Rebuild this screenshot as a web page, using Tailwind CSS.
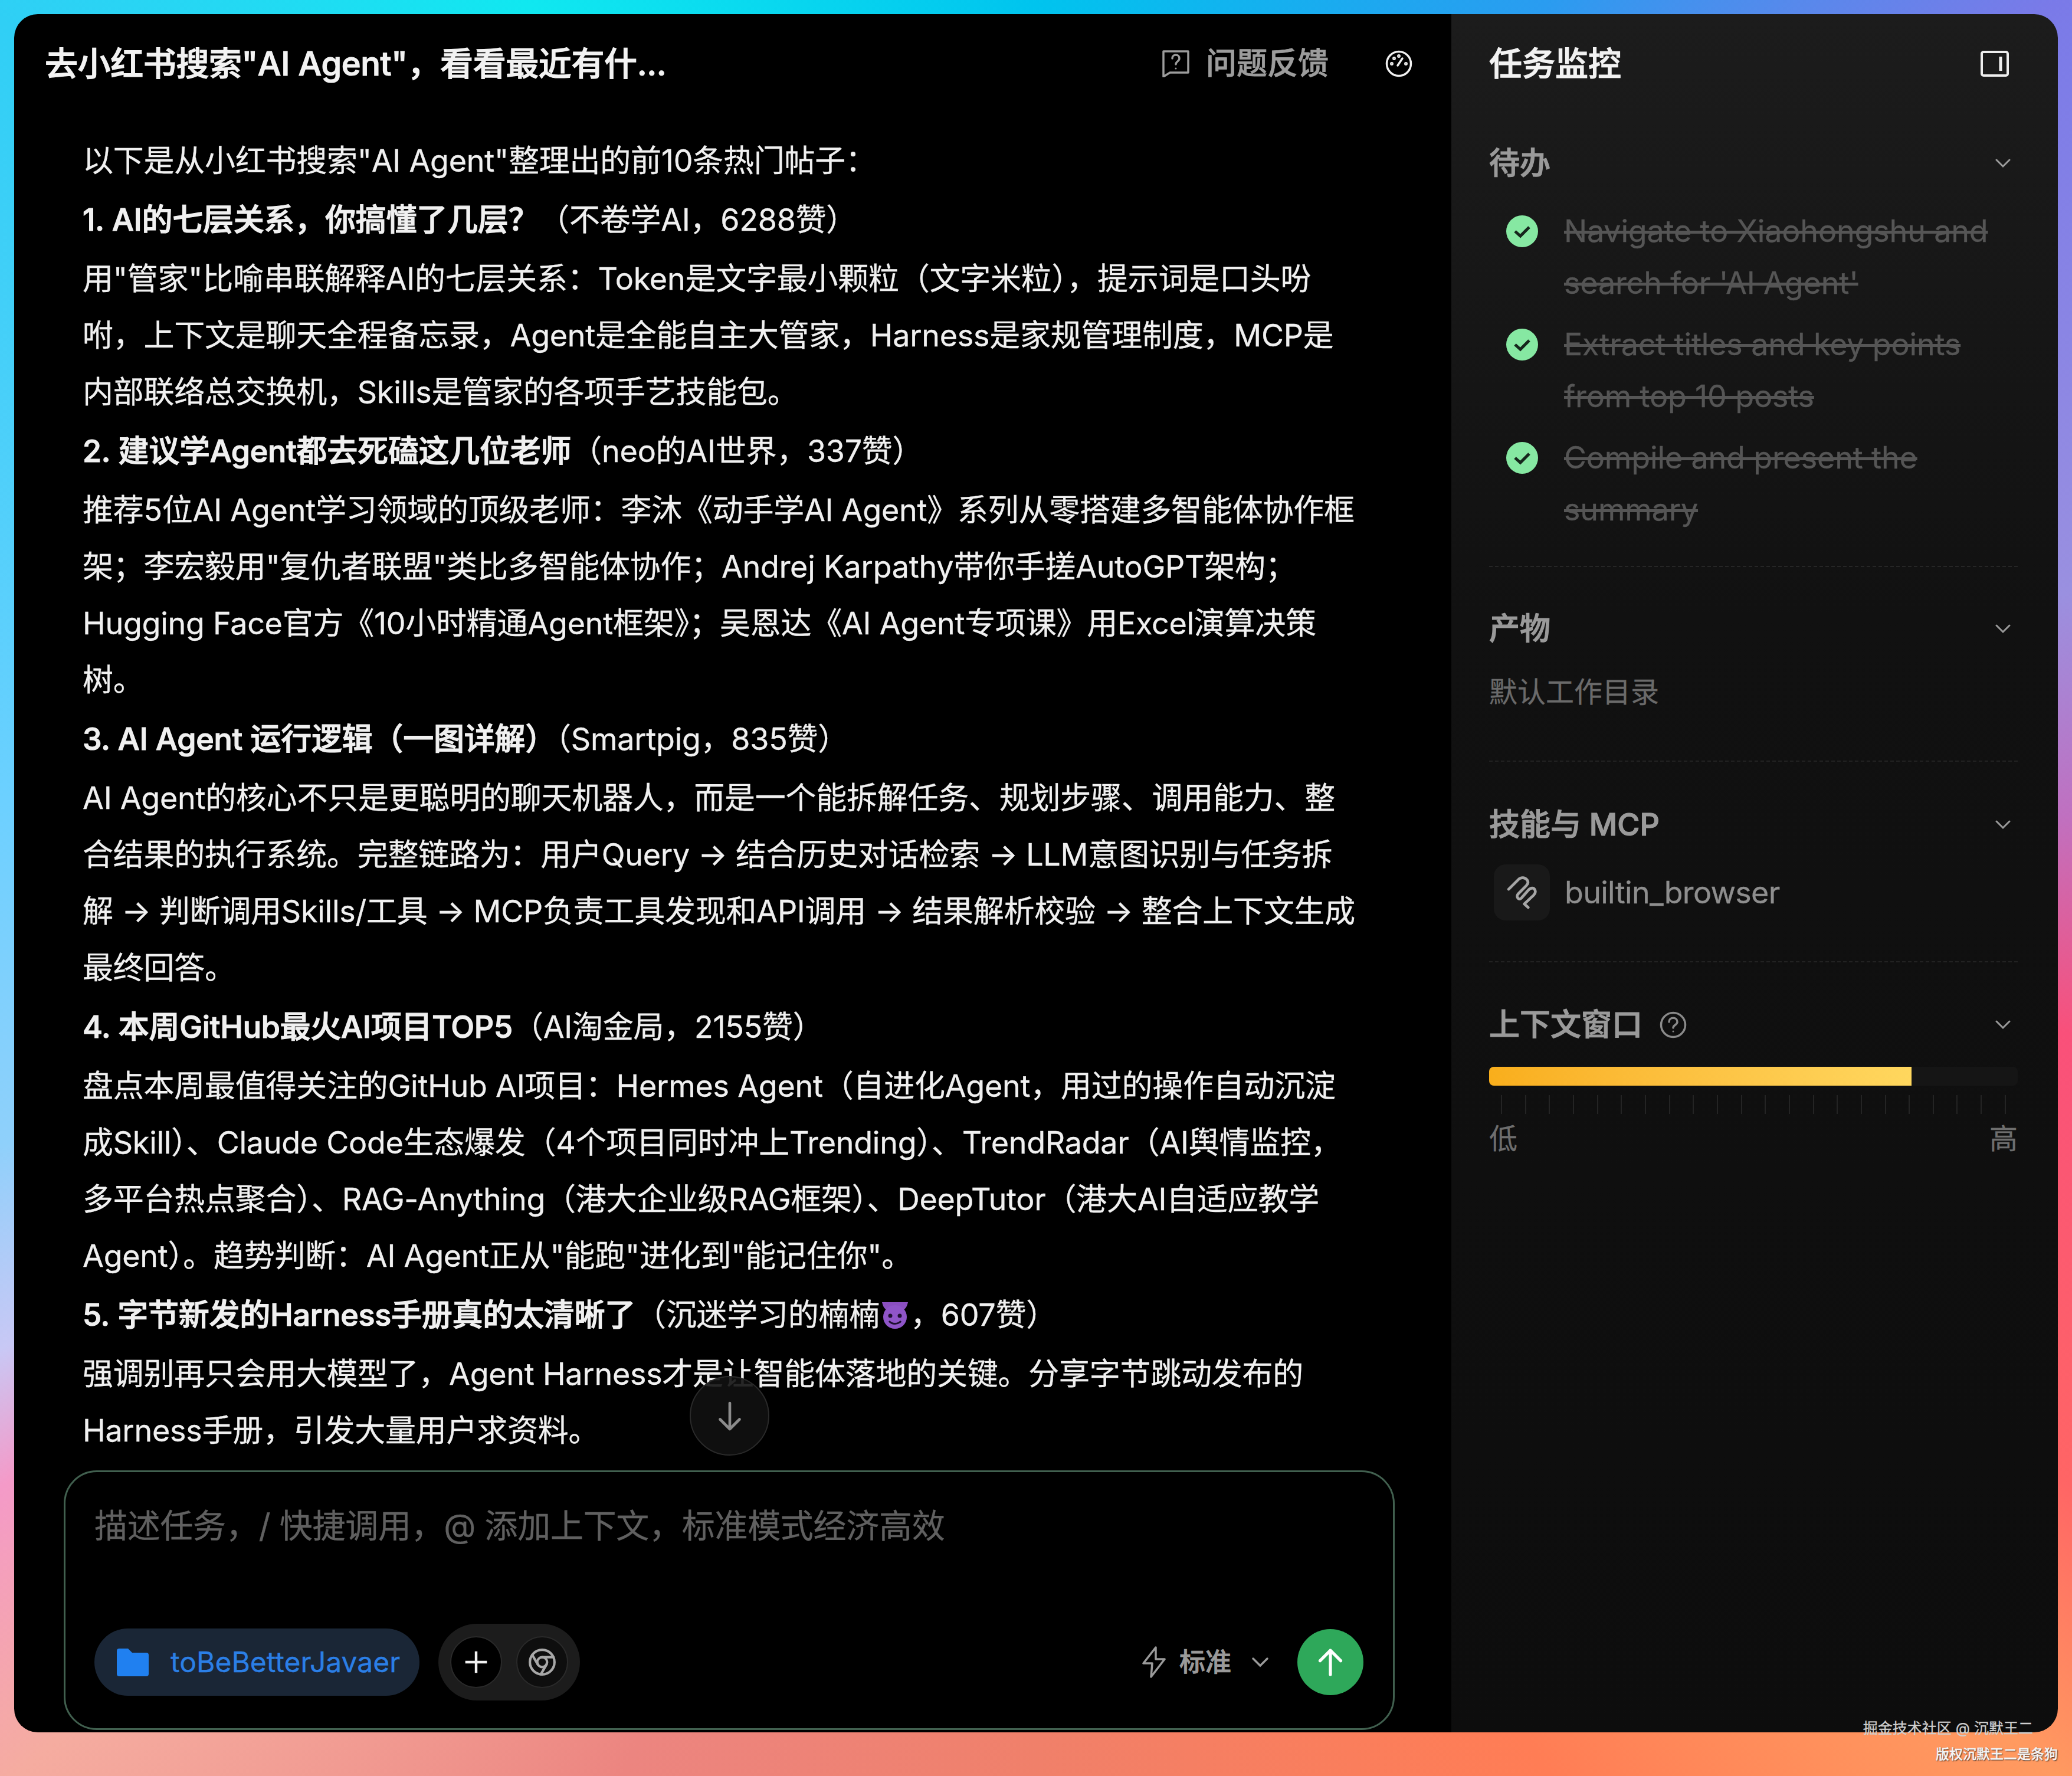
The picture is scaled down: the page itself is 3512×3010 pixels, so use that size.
<!DOCTYPE html>
<html lang="zh-CN">
<head>
  <meta charset="UTF-8" />
  <title>任务监控</title>
  <script src="https://cdn.jsdelivr.net/npm/@tailwindcss/browser@4"></script>
</head>
<body class="relative w-[3512px] h-[3010px] overflow-hidden p-[24px] font-['Inter','Noto_Sans_CJK_SC',sans-serif] [-webkit-text-stroke:0.3px] bg-[conic-gradient(from_0deg_at_50%_50%,#00c4ee_0deg,#2a9cf0_30deg,#7a7ae8_49deg,#9a90e0_74deg,#c070c0_86deg,#f9507a_98deg,#ff6565_120deg,#ff9a60_131deg,#ff7d55_150deg,#f0806a_180deg,#ec8580_205deg,#f5aca0_229deg,#f49ac8_240deg,#c8c8f5_246deg,#8fd0fb_256deg,#6cd0ff_275deg,#30cff5_310deg,#10e8f0_330deg,#00c4ee_360deg)]">

  <div class="flex w-[3464px] h-[2912px] rounded-[40px] overflow-hidden">

    <!-- chat -->
    <main class="relative flex flex-col w-[2436px] bg-black">
      <header class="flex items-center h-[168px] pl-[52px] pr-[66px] shrink-0">
        <h1 class="text-[56px] leading-[72px] font-medium tracking-[-0.4px] text-[#f2f2f2] whitespace-nowrap [-webkit-text-stroke:1.2px]">去小红书搜索"AI Agent"，看看最近有什...</h1>
        <div class="ml-auto flex items-center text-[#9c9c9c]">
          <svg class="w-[46px] h-[46px] mr-[28px]" viewBox="0 0 46 46" fill="none" stroke="currentColor" stroke-width="3.5"><path d="M2 2h42v36H13L2 45z" stroke-linejoin="round"/><path d="M17 14c0-8 12-8 12 0 0 5-6 5-6 10" stroke-linecap="round"/><circle cx="23" cy="31" r="1.5" fill="currentColor" stroke="none"/></svg>
          <span class="text-[52px] leading-[72px] font-medium [-webkit-text-stroke:0.8px]">问题反馈</span>
          <svg class="w-[46px] h-[46px] ml-[96px] text-[#f0f0f0]" viewBox="0 0 46 46" fill="none" stroke="currentColor" stroke-width="3.5" stroke-linecap="round"><circle cx="23" cy="23" r="20.5"/><path d="M21 26l8-12"/><circle cx="11" cy="23" r="1.2"/><circle cx="15" cy="14" r="1.2"/><circle cx="23" cy="10" r="1.2"/><circle cx="35" cy="23" r="1.2"/></svg>
        </div>
      </header>

      <article class="flex-1 min-h-0 overflow-hidden pt-[33px] pl-[116px] flex flex-col gap-[4px] text-[52px] leading-[96px] tracking-[-0.25px] text-[#f0f0f0] whitespace-nowrap">
        <p>以下是从小红书搜索"AI Agent"整理出的前10条热门帖子：</p>
        <p><b class="font-medium [-webkit-text-stroke:1.2px]">1. AI的七层关系，你搞懂了几层？</b>（不卷学AI，6288赞）</p>
        <p>用"管家"比喻串联解释AI的七层关系：Token是文字最小颗粒（文字米粒），提示词是口头吩<br>咐，上下文是聊天全程备忘录，Agent是全能自主大管家，Harness是家规管理制度，MCP是<br>内部联络总交换机，Skills是管家的各项手艺技能包。</p>
        <p><b class="font-medium [-webkit-text-stroke:1.2px]">2. 建议学Agent都去死磕这几位老师</b>（neo的AI世界，337赞）</p>
        <p>推荐5位AI Agent学习领域的顶级老师：李沐《动手学AI Agent》系列从零搭建多智能体协作框<br>架；李宏毅用"复仇者联盟"类比多智能体协作；Andrej Karpathy带你手搓AutoGPT架构；<br>Hugging Face官方《10小时精通Agent框架》；吴恩达《AI Agent专项课》用Excel演算决策<br>树。</p>
        <p><b class="font-medium [-webkit-text-stroke:1.2px]">3. AI Agent 运行逻辑（一图详解）</b>（Smartpig，835赞）</p>
        <p>AI Agent的核心不只是更聪明的聊天机器人，而是一个能拆解任务、规划步骤、调用能力、整<br>合结果的执行系统。完整链路为：用户Query → 结合历史对话检索 → LLM意图识别与任务拆<br>解 → 判断调用Skills/工具 → MCP负责工具发现和API调用 → 结果解析校验 → 整合上下文生成<br>最终回答。</p>
        <p><b class="font-medium [-webkit-text-stroke:1.2px]">4. 本周GitHub最火AI项目TOP5</b>（AI淘金局，2155赞）</p>
        <p>盘点本周最值得关注的GitHub AI项目：Hermes Agent（自进化Agent，用过的操作自动沉淀<br>成Skill）、Claude Code生态爆发（4个项目同时冲上Trending）、TrendRadar（AI舆情监控，<br>多平台热点聚合）、RAG-Anything（港大企业级RAG框架）、DeepTutor（港大AI自适应教学<br>Agent）。趋势判断：AI Agent正从"能跑"进化到"能记住你"。</p>
        <p><b class="font-medium [-webkit-text-stroke:1.2px]">5. 字节新发的Harness手册真的太清晰了</b>（沉迷学习的楠楠<svg class="inline-block w-[52px] h-[52px] align-[-8px]" viewBox="0 0 52 52"><path d="M4 4c2 8 4 11 9 14h26c5-3 7-6 9-14z" fill="#8a4fc0"/><circle cx="26" cy="29" r="20" fill="#8f55c8"/><circle cx="18" cy="27" r="3.5" fill="#1d1030"/><circle cx="34" cy="27" r="3.5" fill="#1d1030"/><path d="M16 36c5 6 15 6 20 0" fill="none" stroke="#1d1030" stroke-width="3"/></svg>，607赞）</p>
        <p>强调别再只会用大模型了，Agent Harness才是让智能体落地的关键。分享字节跳动发布的<br>Harness手册，引发大量用户求资料。</p>
      </article>

      <button class="absolute left-[1145px] top-[2308px] flex items-center justify-center w-[135px] h-[135px] rounded-full bg-[#111111]/90 border-2 border-[#2a2a2a] text-[#8c8c8c]">
        <svg class="w-[66px] h-[66px]" viewBox="0 0 24 24" fill="none" stroke="currentColor" stroke-width="1.7" stroke-linecap="round" stroke-linejoin="round"><path d="M12 4v16M6 14l6 6 6-6"/></svg>
      </button>

      <section class="flex flex-col shrink-0 ml-[84px] mb-[4px] w-[2256px] h-[440px] rounded-[56px] border-[3px] border-[#41604f] pl-[49px] pr-[50px] pt-[55px] pb-[47px]">
        <div class="text-[56px] leading-[72px] tracking-[-0.3px] text-[#606060] whitespace-nowrap">描述任务，/ 快捷调用，@ 添加上下文，标准模式经济高效</div>
        <div class="mt-auto flex items-center">
          <div class="flex items-center h-[114px] w-[551px] rounded-full bg-[#1a2636] pl-[38px] text-[#2b7fe6]">
            <svg class="w-[54px] h-[48px] mr-[37px]" viewBox="0 0 54 48" fill="#2080f0"><path d="M0 5a4 4 0 0 1 4-4h15l7 7h24a4 4 0 0 1 4 4v32a4 4 0 0 1-4 4H4a4 4 0 0 1-4-4z"/></svg>
            <span class="text-[48px] leading-[64px]">toBeBetterJavaer</span>
          </div>
          <div class="flex items-center gap-[24px] ml-[32px] h-[130px] rounded-full bg-[#1c1c1c] px-[20px]">
            <span class="flex items-center justify-center w-[88px] h-[88px] rounded-full bg-black border-2 border-[#2a2a2a] text-[#f2f2f2]">
              <svg class="w-[44px] h-[44px]" viewBox="0 0 24 24" fill="none" stroke="currentColor" stroke-width="2.4"><path d="M12 2v20M2 12h20"/></svg>
            </span>
            <span class="flex items-center justify-center w-[88px] h-[88px] rounded-full bg-[#0e0e0e] border-2 border-[#2a2a2a] text-[#a8a8a8]">
              <svg class="w-[50px] h-[50px]" viewBox="0 0 24 24" fill="none" stroke="currentColor" stroke-width="2" stroke-linecap="round"><circle cx="12" cy="12" r="10"/><circle cx="12" cy="12" r="4"/><path d="M21.2 8H12M3.9 6.1 8.5 14M10.9 21.9 15.5 14"/></svg>
            </span>
          </div>
          <div class="ml-auto flex items-center text-[#9a9a9a]">
            <svg class="w-[42px] h-[56px] mr-[22px]" viewBox="0 0 42 56" fill="none" stroke="currentColor" stroke-width="3.5" stroke-linejoin="round"><path d="M24 3L3 30h15l-2 23 23-30H24z"/></svg>
            <span class="text-[44px] leading-[60px] font-medium [-webkit-text-stroke:0.8px]">标准</span>
            <svg class="w-[30px] h-[18px] ml-[34px]" viewBox="0 0 30 18" fill="none" stroke="currentColor" stroke-width="3.5" stroke-linecap="round"><path d="M3 3l12 12L27 3"/></svg>
            <span class="flex items-center justify-center w-[112px] h-[112px] ml-[48px] rounded-full bg-[#2ea85a] text-white">
              <svg class="w-[56px] h-[56px]" viewBox="0 0 24 24" fill="none" stroke="currentColor" stroke-width="2.2" stroke-linecap="round" stroke-linejoin="round"><path d="M12 21V3.5M4.5 11 12 3.5l7.5 7.5"/></svg>
            </span>
          </div>
        </div>
      </section>
    </main>

    <!-- task monitor -->
    <aside class="w-[1028px] pl-[64px] pr-[68px] bg-linear-to-b from-[#1c1c1c] via-[#111111] via-35% to-[#0d0d0d]">
      <header class="flex items-center justify-between h-[168px]">
        <h2 class="text-[56px] leading-[72px] font-medium text-[#f2f2f2] [-webkit-text-stroke:1.2px]">任务监控</h2>
        <svg class="w-[48px] h-[44px] mr-[15px] text-[#eeeeee]" viewBox="0 0 48 44" fill="none" stroke="currentColor" stroke-width="4"><rect x="2" y="2" width="44" height="40" rx="3"/><path d="M34 10v24" stroke-width="5"/></svg>
      </header>

      <section class="pt-[49px] pb-[52px] border-b-2 border-dashed border-[#262626]">
        <div class="flex items-center justify-between h-[72px] text-[#9a9a9a]">
          <h3 class="text-[52px] font-medium [-webkit-text-stroke:1.2px]">待办</h3>
          <svg class="w-[26px] h-[16px] mr-[12px]" viewBox="0 0 26 16" fill="none" stroke="currentColor" stroke-width="3" stroke-linecap="round"><path d="M2 2l11 11L24 2"/></svg>
        </div>
        <ul class="mt-[35px] flex flex-col gap-[17px] text-[52px] leading-[87.5px] tracking-[-0.15px] text-[#555555] line-through">
          <li class="flex">
            <svg class="shrink-0 w-[54px] h-[54px] mt-[17px] ml-[29px] mr-[44px]" viewBox="0 0 54 54"><circle cx="27" cy="27" r="27" fill="#86e8a2"/><path d="M15 27l9 8 15-15" fill="none" stroke="#16261c" stroke-width="5"/></svg>
            <span>Navigate to Xiaohongshu and<br>search for 'AI Agent'</span>
          </li>
          <li class="flex">
            <svg class="shrink-0 w-[54px] h-[54px] mt-[17px] ml-[29px] mr-[44px]" viewBox="0 0 54 54"><circle cx="27" cy="27" r="27" fill="#86e8a2"/><path d="M15 27l9 8 15-15" fill="none" stroke="#16261c" stroke-width="5"/></svg>
            <span>Extract titles and key points<br>from top 10 posts</span>
          </li>
          <li class="flex">
            <svg class="shrink-0 w-[54px] h-[54px] mt-[17px] ml-[29px] mr-[44px]" viewBox="0 0 54 54"><circle cx="27" cy="27" r="27" fill="#86e8a2"/><path d="M15 27l9 8 15-15" fill="none" stroke="#16261c" stroke-width="5"/></svg>
            <span>Compile and present the<br>summary</span>
          </li>
        </ul>
      </section>

      <section class="pt-[69px] pb-[80px] border-b-2 border-dashed border-[#222222]">
        <div class="flex items-center justify-between h-[72px] text-[#9a9a9a]">
          <h3 class="text-[52px] font-medium [-webkit-text-stroke:1.2px]">产物</h3>
          <svg class="w-[26px] h-[16px] mr-[12px]" viewBox="0 0 26 16" fill="none" stroke="currentColor" stroke-width="3" stroke-linecap="round"><path d="M2 2l11 11L24 2"/></svg>
        </div>
        <p class="mt-[35px] text-[48px] leading-[72px] text-[#6a6a6a]">默认工作目录</p>
      </section>

      <section class="pt-[71px] pb-[69px] border-b-2 border-dashed border-[#222222]">
        <div class="flex items-center justify-between h-[72px] text-[#9a9a9a]">
          <h3 class="text-[52px] font-medium [-webkit-text-stroke:1.2px]">技能与 MCP</h3>
          <svg class="w-[26px] h-[16px] mr-[12px]" viewBox="0 0 26 16" fill="none" stroke="currentColor" stroke-width="3" stroke-linecap="round"><path d="M2 2l11 11L24 2"/></svg>
        </div>
        <div class="mt-[31px] flex items-center text-[#8e8e8e]">
          <span class="flex items-center justify-center w-[95px] h-[95px] ml-[8px] mr-[25px] rounded-[20px] bg-[#191919]">
            <svg class="w-[55px] h-[58px]" viewBox="100 95 165 175" fill="none" stroke="#a6a6a6" stroke-width="14" stroke-linecap="round" stroke-linejoin="round"><path d="M115 165L165 115C180 100 200 105 210 118C218 130 212 140 205 147L165 187C150 200 165 225 180 210L215 170C228 155 245 155 250 170C254 180 250 188 243 195L195 240L215 258"/></svg>
          </span>
          <span class="text-[52px] leading-[72px] tracking-[-0.7px]">builtin_browser</span>
        </div>
      </section>

      <section class="pt-[70px]">
        <div class="flex items-center h-[72px] text-[#9a9a9a]">
          <h3 class="text-[52px] font-medium [-webkit-text-stroke:1.2px]">上下文窗口</h3>
          <svg class="w-[46px] h-[46px] ml-[29px] text-[#8a8a8a]" viewBox="0 0 46 46" fill="none" stroke="currentColor" stroke-width="3.5" stroke-linecap="round"><circle cx="23" cy="23" r="20.5"/><path d="M16 18c0-9 14-9 14 0 0 5-7 5-7 10"/><circle cx="23" cy="34" r="1.5" fill="currentColor" stroke="none"/></svg>
          <svg class="ml-auto w-[26px] h-[16px] mr-[12px]" viewBox="0 0 26 16" fill="none" stroke="currentColor" stroke-width="3" stroke-linecap="round"><path d="M2 2l11 11L24 2"/></svg>
        </div>
        <div class="mt-[35px] h-[32px] rounded-[8px] bg-[#151515] overflow-hidden">
          <div class="h-full w-[716px] bg-linear-to-r from-[#f9ae1b] to-[#ffd75e]"></div>
        </div>
        <div class="mt-[16px] flex justify-between h-[32px] px-[20px]">
          <i class="w-[2px] bg-[#242424]"></i><i class="w-[2px] bg-[#242424]"></i><i class="w-[2px] bg-[#242424]"></i><i class="w-[2px] bg-[#242424]"></i><i class="w-[2px] bg-[#242424]"></i><i class="w-[2px] bg-[#242424]"></i><i class="w-[2px] bg-[#242424]"></i><i class="w-[2px] bg-[#242424]"></i><i class="w-[2px] bg-[#242424]"></i><i class="w-[2px] bg-[#242424]"></i><i class="w-[2px] bg-[#242424]"></i><i class="w-[2px] bg-[#242424]"></i><i class="w-[2px] bg-[#242424]"></i><i class="w-[2px] bg-[#242424]"></i><i class="w-[2px] bg-[#242424]"></i><i class="w-[2px] bg-[#242424]"></i><i class="w-[2px] bg-[#242424]"></i><i class="w-[2px] bg-[#242424]"></i><i class="w-[2px] bg-[#242424]"></i><i class="w-[2px] bg-[#242424]"></i><i class="w-[2px] bg-[#242424]"></i><i class="w-[2px] bg-[#242424]"></i>
        </div>
        <div class="mt-[12px] flex justify-between text-[48px] leading-[60px] text-[#6e6e6e]">
          <span>低</span><span>高</span>
        </div>
      </section>
    </aside>
  </div>

  <!-- watermark -->
  <div class="absolute right-[66px] top-[2915px] text-[25px] leading-[28px] text-[#cfcfcf] whitespace-nowrap">掘金技术社区 @ 沉默王二</div>
  <div class="absolute right-[24px] top-[2959px] text-[23px] leading-[28px] font-medium text-[#f5f5f5] whitespace-nowrap [text-shadow:1px_1px_2px_#222]">版权沉默王二是条狗</div>
</body>
</html>
